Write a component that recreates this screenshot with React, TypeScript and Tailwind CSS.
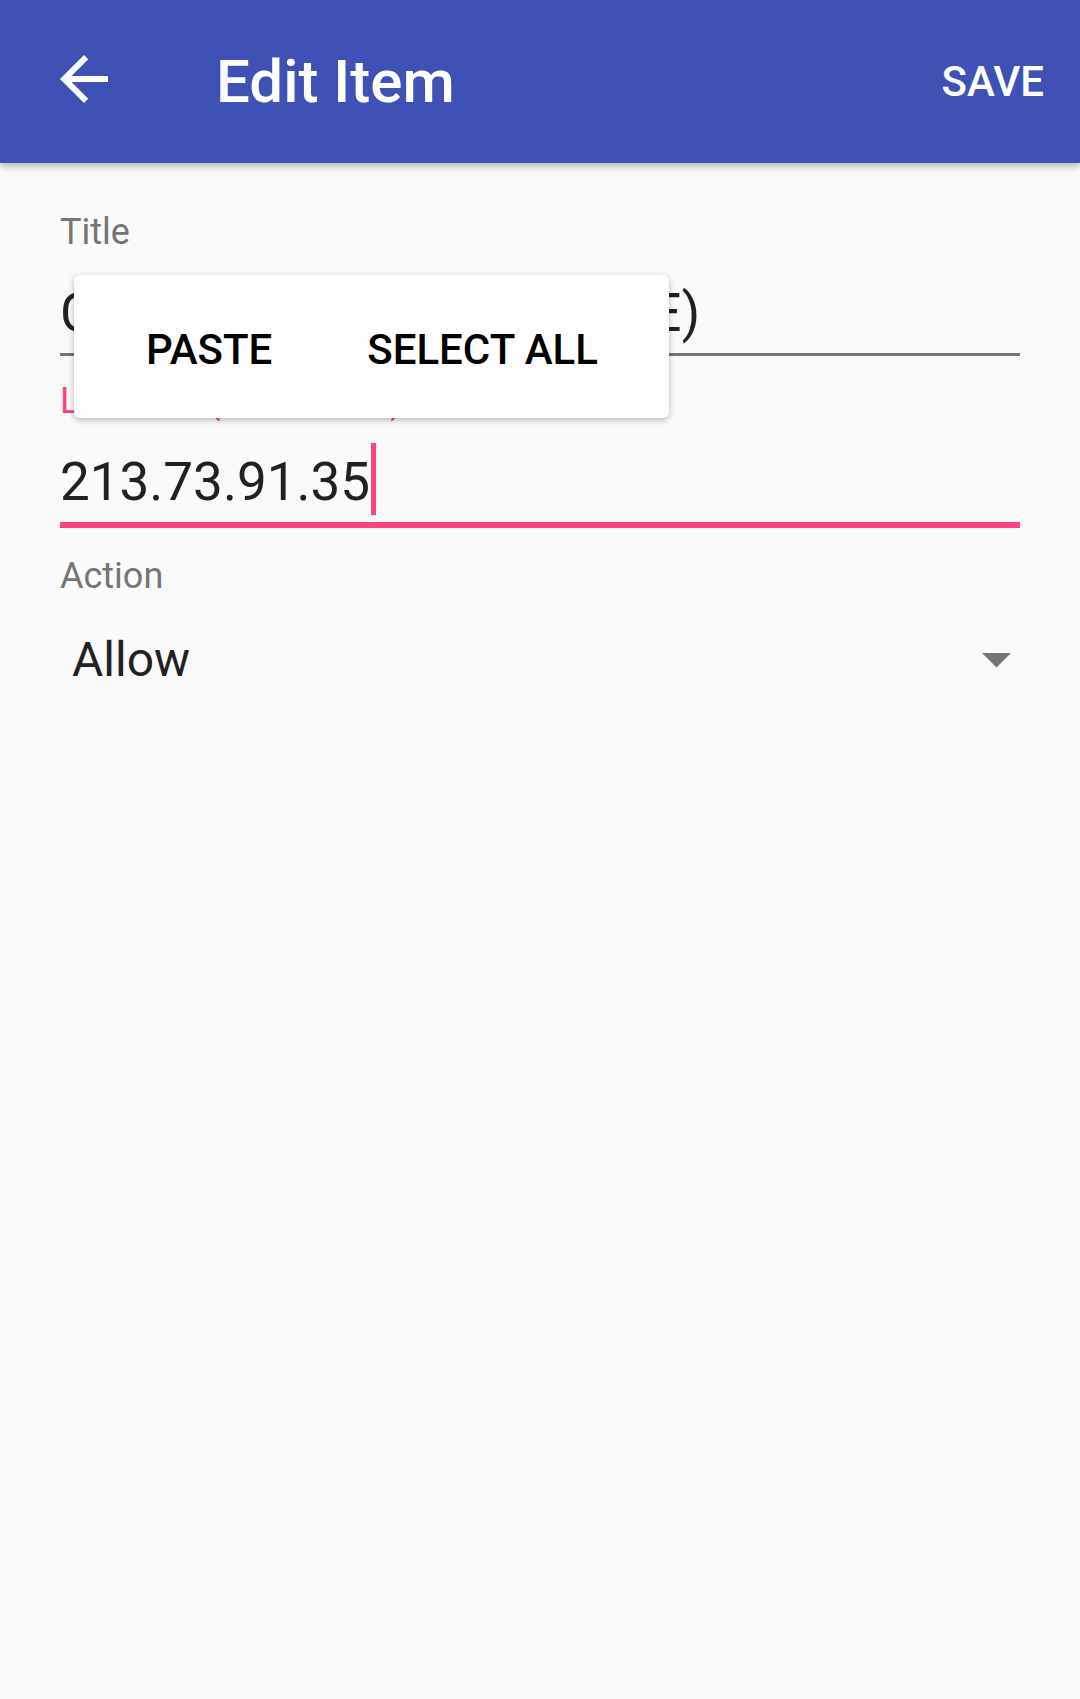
export default function App() {
  return (
    <div className="relative min-h-[1699px] bg-[#fafafa] font-[Roboto,'Liberation_Sans',sans-serif]">
      <header className="relative z-10 flex h-[163px] items-center bg-[#3f51b5] shadow-[0_3px_8px_rgba(0,0,0,0.3)]">
        <button className="mb-[5px] ml-[48px] shrink-0 text-white" aria-label="Back">
          <svg width="72" height="72" viewBox="0 0 24 24" fill="currentColor">
            <path d="M20 11H7.83l5.59-5.59L12 4l-8 8 8 8 1.41-1.41L7.83 13H20v-2z" />
          </svg>
        </button>
        <h1 className="ml-[96px] text-[60px] font-medium leading-[60px] text-white">Edit Item</h1>
        <span className="ml-auto mr-[36px] text-[42px] font-medium leading-[42px] text-white">SAVE</span>
      </header>

      <main className="px-[60px] pt-[51px]">
        {/* Title */}
        <div>
          <p className="text-[36px] leading-[36px] text-[#757575]">Title</p>
          <div className="mt-[37px] h-[53px] whitespace-nowrap text-[53px] leading-[53px] tracking-[0.4px] text-[#212121]">
            Chaos Computer Club (DE)
          </div>
          <div className="mt-[13px] h-[3px] bg-[#757575]" />
        </div>

        {/* Location (focused) */}
        <div className="mt-[27px]">
          <p className="text-[36px] leading-[36px] text-[#ff4081]">Location (IP address)</p>
          <div className="mt-[37px] flex h-[53px] items-start text-[53px] leading-[53px] text-[#212121]">
            <span>213.73.91.35</span>
            <span className="-mt-[13px] ml-[1px] h-[72px] w-[5px] shrink-0 bg-[#ff4081]" />
          </div>
          <div className="mt-[13px] h-[6px] bg-[#ff4081]" />
        </div>

        {/* Action */}
        <div className="mt-[30px]">
          <p className="text-[36px] leading-[36px] text-[#757575]">Action</p>
          <div className="mt-[42px] flex h-[48px] items-center justify-between pl-[12px]">
            <span className="text-[48px] leading-[48px] text-[#212121]">Allow</span>
            <svg width="29" height="15" viewBox="0 0 29 15" className="mr-[9px]">
              <polygon points="0,0 29,0 14.5,14.5" fill="#757575" />
            </svg>
          </div>
        </div>
      </main>

      {/* text selection toolbar */}
      <div className="absolute left-[74px] top-[275px] z-20 flex h-[143px] w-[595px] items-start gap-[95px] rounded-[6px] bg-white pl-[72px] pt-[54px] shadow-[0_2px_6px_rgba(0,0,0,0.28)]">
        <span className="text-[42px] font-medium leading-[42px] text-black">PASTE</span>
        <span className="text-[42px] font-medium leading-[42px] text-black">SELECT ALL</span>
      </div>
    </div>
  );
}
